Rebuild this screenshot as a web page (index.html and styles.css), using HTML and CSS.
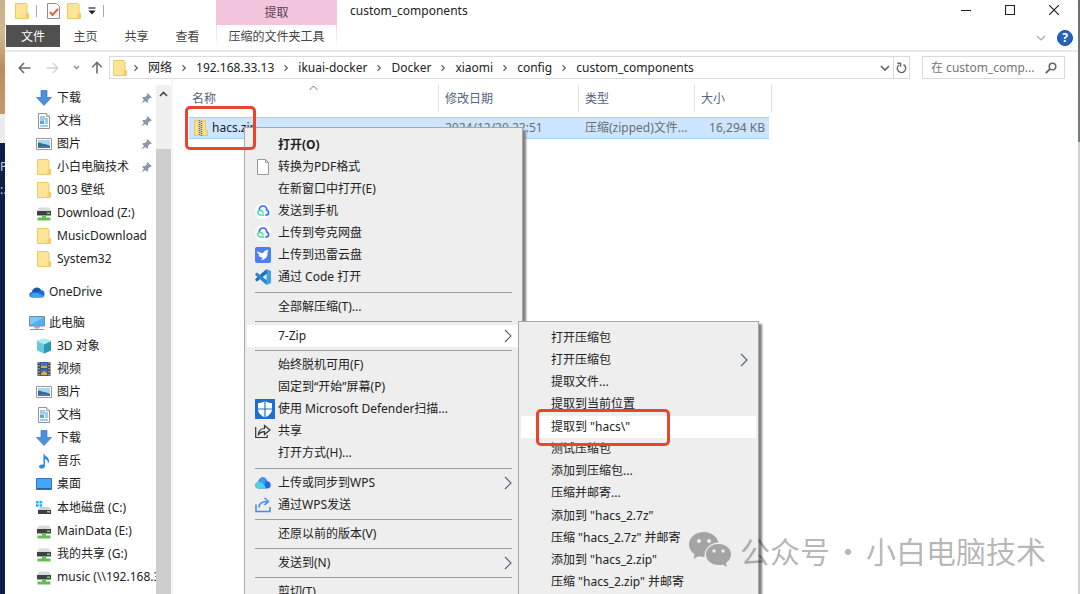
FILE: index.html
```html
<!DOCTYPE html>
<html lang="zh-CN">
<head>
<meta charset="utf-8">
<title>custom_components</title>
<link rel="stylesheet" href="styles.css">
</head>
<body>
<svg class="defs" aria-hidden="true">
  <symbol id="folder" viewBox="0 0 14 16"><path d="M.5.5h10.500l1 1v9h1.500v5H.5z" fill="#fbe08a" stroke="#ecca66"/><path d="M1 1h10v14H1z" fill="#fde496"/><path d="M11.500 10.500h2v5h-3v-4z" fill="#f3cf62"/></symbol>
  <symbol id="chev" viewBox="0 0 6 8"><path d="M1.500 1.200 4.300 4 1.500 6.800" fill="none" stroke="#666" stroke-width="1.300"/></symbol>
  <symbol id="arrow" viewBox="0 0 8 14"><path d="M1 1l6 6-6 6" fill="none" stroke="#555a78" stroke-width="1.100"/></symbol>
  <symbol id="down" viewBox="0 0 16 16"><path d="M5 .5h6v7h4.500L8 15.500.5 7.500H5z" fill="#4a90dd" stroke="#3a78c4" stroke-width=".7"/></symbol>
  <symbol id="doc" viewBox="0 0 16 16"><path d="M2.500.5h8l3 3v12h-11z" fill="#fafcfd" stroke="#8f9599"/><path d="M10.500.5v3h3" fill="#dde3e8" stroke="#8f9599" stroke-width=".8"/><path d="M4 4h5M4 6h8M9 8h3M9 10h3M4 13h8" stroke="#4c9bd3"/><path d="M4 7.500h4V11H4z" fill="#5aa5dc"/></symbol>
  <symbol id="pic" viewBox="0 0 16 14"><path d="M.5 1.500h15v11H.5z" fill="#fff" stroke="#999"/><path d="M2 3h12v8H2z" fill="#a8d4f5"/><path d="M2 6c3-1 4 1 6 1s4 1 6 2v2H2z" fill="#356b75"/><path d="M2 9c4-1 8 0 12 1v1H2z" fill="#3579bb"/></symbol>
  <symbol id="netdrive" viewBox="0 0 16 16"><path d="M3 2.500h10l2 3.500H1z" fill="#d8dadc"/><path d="M1 6h14v4.500H1z" fill="#3d4143"/><path d="M11 7.500h3V9h-3z" fill="#65df63"/><path d="M6 10.500h4v2h4.500v3h-13v-3H6z" fill="#63bf55"/></symbol>
  <symbol id="pin" viewBox="0 0 12 12"><path d="M6.500 1 11 5.500l-1.300.5-.6-.2L7 8l.1 2-1 .8L1.200 6 2 5l2 .1L6.200 3l-.2-.8zM3 7.600l1.400 1.400L.5 11.500z" fill="#8b98a5"/></symbol>
  <symbol id="quark" viewBox="0 0 16 16"><circle cx="8" cy="8" r="8" fill="#fff"/><path d="M4.200 7.200C4.400 4.800 5.800 3 8 3c2.500 0 3.600 2 3.700 4 2.800 1 2.400 5-.6 5h-.8" fill="none" stroke="#3d68f2" stroke-width="1.700"/><path d="M9 12H5.200C2.300 12 2 8.500 4 7.600c2.200-.9 4.200.6 4 3" fill="none" stroke="#43dca6" stroke-width="1.500"/></symbol>
</svg>

<div class="desktop">
  <div class="backdrop-left" aria-hidden="true">
    <div class="wood"></div><div class="pale"></div>
    <div class="terminal"><span>P</span><span>:.</span></div>
  </div>

  <div class="window">
    <header class="titlebar">
      <div class="quick">
        <svg class="i-folder"><use href="#folder"/></svg>
        <i class="tick"></i>
        <button class="plain" aria-label="属性"><svg width="13" height="16" viewBox="0 0 13 16"><path d="M.5.500h9l3 3v12H.5z" fill="#fafafa" stroke="#909090"/><path d="m3 9 2.500 3L11 6" fill="none" stroke="#dc6840" stroke-width="2"/></svg></button>
        <button class="plain" aria-label="新建文件夹"><svg class="i-folder"><use href="#folder"/></svg></button>
        <button class="plain" aria-label="自定义快速访问工具栏"><svg width="8" height="8" viewBox="0 0 8 8"><path d="M.5 1h7" stroke="#222" stroke-width="1.200"/><path d="M.3 3.500h7.400L4 7.500z" fill="#222"/></svg></button>
        <i class="tick"></i>
      </div>
      <div class="context-label">提取</div>
      <h1>custom_components</h1>
      <div class="controls">
        <button class="plain" aria-label="最小化"><svg width="10" height="10" viewBox="0 0 10 10"><path d="M0 5.500h10" stroke="#222"/></svg></button>
        <button class="plain" aria-label="最大化"><svg width="10" height="10" viewBox="0 0 10 10"><path d="M.5.500h9v9h-9z" fill="none" stroke="#222" stroke-width="1.200"/></svg></button>
        <button class="plain" aria-label="关闭"><svg width="10" height="10" viewBox="0 0 10 10"><path d="m0 0 10 10M10 0 0 10" stroke="#222" stroke-width="1.200"/></svg></button>
      </div>
    </header>

    <nav class="ribbon">
      <button class="tab file">文件</button>
      <button class="tab">主页</button>
      <button class="tab">共享</button>
      <button class="tab">查看</button>
      <button class="tab context">压缩的文件夹工具</button>
      <button class="plain expand" aria-label="展开功能区"><svg width="10" height="6" viewBox="0 0 10 6"><path d="m1 1 4 4 4-4" fill="none" stroke="#aaa" stroke-width="1.200"/></svg></button>
      <button class="help" aria-label="帮助">?</button>
    </nav>

    <div class="addressbar">
      <div class="history">
        <button class="plain" aria-label="后退"><svg width="13" height="12" viewBox="0 0 13 12"><path d="M12.500 6H1.500M6 1 1.200 6 6 11" fill="none" stroke="#6c6c6c" stroke-width="1.600"/></svg></button>
        <button class="plain" aria-label="前进"><svg width="13" height="12" viewBox="0 0 13 12"><path d="M.5 6h11M7 1l4.800 5L7 11" fill="none" stroke="#d2d2d2" stroke-width="1.400"/></svg></button>
        <button class="plain" aria-label="最近浏览的位置"><svg width="7" height="5" viewBox="0 0 7 5"><path d="m1 1 2.500 2.500L6 1" fill="none" stroke="#888" stroke-width="1.300"/></svg></button>
        <button class="plain" aria-label="上移"><svg width="12" height="13" viewBox="0 0 12 13"><path d="M6 12.500V1.500M1.200 6.200 6 1.300l4.800 4.900" fill="none" stroke="#6c6c6c" stroke-width="1.600"/></svg></button>
      </div>
      <div class="path">
        <svg class="i-folder"><use href="#folder"/></svg>
        <ol>
          <li><svg class="i-chev"><use href="#chev"/></svg><a href="#">网络</a></li>
          <li><svg class="i-chev"><use href="#chev"/></svg><a href="#">192.168.33.13</a></li>
          <li><svg class="i-chev"><use href="#chev"/></svg><a href="#">ikuai-docker</a></li>
          <li><svg class="i-chev"><use href="#chev"/></svg><a href="#">Docker</a></li>
          <li><svg class="i-chev"><use href="#chev"/></svg><a href="#">xiaomi</a></li>
          <li><svg class="i-chev"><use href="#chev"/></svg><a href="#">config</a></li>
          <li><svg class="i-chev"><use href="#chev"/></svg><a href="#">custom_components</a></li>
        </ol>
        <button class="plain" aria-label="以前的位置"><svg width="10" height="6" viewBox="0 0 10 6"><path d="m1 1 4 4 4-4" fill="none" stroke="#666" stroke-width="1.700"/></svg></button>
        <button class="plain refresh" aria-label="刷新"><svg width="11" height="12" viewBox="0 0 11 12"><path d="M7.500 2.700A4.200 4.200 0 1 1 3 3M1.200 1.300h3.300v3.400" fill="none" stroke="#666" stroke-width="1.400"/></svg></button>
      </div>
      <div class="search">
        <input type="text" aria-label="搜索" placeholder="在 custom_comp...">
        <svg width="12" height="12" viewBox="0 0 12 12"><circle cx="7.500" cy="4.500" r="3.300" fill="none" stroke="#666" stroke-width="1.500"/><path d="M5 7 .8 11.200" stroke="#666" stroke-width="1.800"/></svg>
      </div>
    </div>

    <div class="content">
      <aside class="sidebar">
        <nav class="tree">
          <ul>
            <li><svg class="i"><use href="#down"/></svg><a href="#">下载</a><svg class="i-pin"><use href="#pin"/></svg></li>
            <li><svg class="i"><use href="#doc"/></svg><a href="#">文档</a><svg class="i-pin"><use href="#pin"/></svg></li>
            <li><svg class="i"><use href="#pic"/></svg><a href="#">图片</a><svg class="i-pin"><use href="#pin"/></svg></li>
            <li><svg class="i"><use href="#folder"/></svg><a href="#">小白电脑技术</a><svg class="i-pin"><use href="#pin"/></svg></li>
            <li><svg class="i"><use href="#folder"/></svg><a href="#">003 壁纸</a></li>
            <li><svg class="i"><use href="#netdrive"/></svg><a href="#">Download (Z:)</a></li>
            <li><svg class="i"><use href="#folder"/></svg><a href="#">MusicDownload</a></li>
            <li><svg class="i"><use href="#folder"/></svg><a href="#">System32</a></li>
          </ul>
          <ul class="cloud">
            <li class="root"><svg class="i" viewBox="0 0 16 12"><path d="M3.500 11.500C-.5 11.500-.8 6.500 3 6c.6-4 6-5.500 8.300-2C14.500 4 16 6 15.500 8.500c0 2-1.500 3-3 3z" fill="#1e6fd0"/><path d="M3 11.500c-2-1-1.500-4 1-4.500 4-1 7 1 11 3-.5 1-1.500 1.500-2.500 1.500z" fill="#3aa0f0"/><path d="M3 6c3-1 6 2 9-2-2-4-8-3-9 2z" fill="#1557b5"/></svg><a href="#">OneDrive</a></li>
          </ul>
          <ul>
            <li class="root"><svg class="i" viewBox="0 0 16 16"><path d="M.5 1.500h15v9.500H.5z" fill="#4db2f8" stroke="#7b8996"/><path d="M1 2h14L1 10z" fill="#7cc9fc"/><path d="M6 11h4v2H6zM1 14.500h14" fill="#bbc4cc" stroke="#8c9aa6"/></svg><a href="#">此电脑</a></li>
            <li><svg class="i" viewBox="0 0 16 16"><path d="M8 .5 15 3v9.500L8 15.500 1 12.500V3z" fill="#67cad8"/><path d="M8 6.500 15 3v9.500l-7 3z" fill="#2898b3"/><path d="M8 .5 15 3 8 6.500 1 3z" fill="#b2ecf0"/></svg><a href="#">3D 对象</a></li>
            <li><svg class="i" viewBox="0 0 16 16"><path d="M1.500 1h13v14h-13z" fill="#444"/><path d="M4.500 1.500h7v6h-7zM4.500 8.500h7v6h-7z" fill="#3f72c4"/><path d="M5 6c2-3 4 1 6-2v3H5zM5 13l3-3 3 2v2H5z" fill="#e8ab3c"/><path d="M3 1v14M13 1v14" stroke="#ddd" stroke-dasharray="1.500 1.500"/></svg><a href="#">视频</a></li>
            <li><svg class="i"><use href="#pic"/></svg><a href="#">图片</a></li>
            <li><svg class="i"><use href="#doc"/></svg><a href="#">文档</a></li>
            <li><svg class="i"><use href="#down"/></svg><a href="#">下载</a></li>
            <li><svg class="i" viewBox="0 0 16 16"><path d="M8 .5c.5 3 5.500 3.500 5 8-.2 1.300-.8 2-1.300 2.500C12.500 8 11 6.500 9 6v7c0 3-6 3.500-6 .8 0-1.800 2.500-2.600 4.500-2V.5z" fill="#2b8ae8"/></svg><a href="#">音乐</a></li>
            <li><svg class="i" viewBox="0 0 16 16"><path d="M.5 2.500h15v11H.5z" fill="#43a5f7" stroke="#2c79c8"/><path d="M1 12h14v1.500H1z" fill="#2367ab"/></svg><a href="#">桌面</a></li>
          </ul>
          <ul>
            <li><svg class="i" viewBox="0 0 16 16"><path d="M0 1h2.700v2.500H0zM3.500 1h2.700v2.500H3.500zM0 4.300h2.700v2.500H0zM3.500 4.300h2.700v2.500H3.500z" fill="#29b0ea"/><path d="M4 7h9l2 3H2z" fill="#cfd2d4"/><path d="M2 10h13v4H2z" fill="#3c4042"/><path d="M11 11h3v1.500h-3z" fill="#72e070"/></svg><a href="#">本地磁盘 (C:)</a></li>
            <li><svg class="i"><use href="#netdrive"/></svg><a href="#">MainData (E:)</a></li>
            <li><svg class="i"><use href="#netdrive"/></svg><a href="#">我的共享 (G:)</a></li>
            <li><svg class="i"><use href="#netdrive"/></svg><a href="#">music (\\192.168.33.13)</a></li>
          </ul>
        </nav>
        <div class="scrollbar"><svg width="9" height="6" viewBox="0 0 9 6"><path d="m1 5 3.500-3.500L8 5" fill="none" stroke="#444" stroke-width="1.600"/></svg><div class="thumb"></div></div>
      </aside>

      <main class="files">
        <table>
          <colgroup><col class="c-name"><col class="c-date"><col class="c-type"><col class="c-size"><col class="c-end"></colgroup>
          <thead><tr>
            <th>名称<svg class="sort" width="9" height="6" viewBox="0 0 9 6"><path d="m.5 5 4-4 4 4" fill="none" stroke="#777"/></svg></th>
            <th>修改日期</th><th>类型</th><th colspan="2">大小</th>
          </tr></thead>
          <tbody><tr>
            <td class="name"><svg width="14" height="16" viewBox="0 0 14 16"><path d="M.5.500h11v10h2v5H.5z" fill="#fbe08a" stroke="#e9c75f"/><path d="M4 0h5v16H4z" fill="#e4d6a6"/><path d="M5.500 0v16M7.500 1v15" stroke="#6d685a" stroke-width="1.400" stroke-dasharray="1 1"/></svg>hacs.zip</td>
            <td>2024/12/20 22:51</td><td>压缩(zipped)文件...</td><td class="size">16,294 KB</td><td class="end"></td>
          </tr></tbody>
        </table>
      </main>
    </div>
  </div>
  <div class="backdrop-right" aria-hidden="true"></div>

  <div class="menu menu-main" role="menu">
    <div class="group long">
      <button role="menuitem"><span></span><b>打开(O)</b></button>
      <button role="menuitem"><svg viewBox="0 0 16 16"><path d="M2.500.5h8l3 3v12h-11z" fill="#fff" stroke="#999"/><path d="M10.500.5v3h3" fill="none" stroke="#999"/></svg>转换为PDF格式</button>
      <button role="menuitem"><span></span>在新窗口中打开(E)</button>
      <button role="menuitem"><svg><use href="#quark"/></svg>发送到手机</button>
      <button role="menuitem"><svg><use href="#quark"/></svg>上传到夸克网盘</button>
      <button role="menuitem"><svg viewBox="0 0 16 16"><rect width="16" height="16" rx="2" fill="#4b7ff2"/><path d="M2 4c2 1.500 4 2 6 2 1-2 3-3.500 5.500-3-.7.800-1 1.800-1 3 .2 4-2.500 7-6.500 7 1-.7 1.500-1.400 1.500-2.400C5 10.500 4 9.500 3.500 8l1.500.2C3 7 2.200 5.600 2 4z" fill="#fff"/></svg>上传到迅雷云盘</button>
      <button role="menuitem"><svg viewBox="0 0 16 16"><path d="M11.500 0 16 2v12l-4.500 2V0z" fill="#3ba3e4"/><path d="m11.500 0 .5 4.500L2 12.500.3 11.200V10L11.500 0z" fill="#1b70b4"/><path d="m11.500 16 .5-4.500L2 3.500.3 4.800V6L11.500 16z" fill="#2687cc"/></svg>通过 Code 打开</button>
    </div>
    <div class="group"><button role="menuitem"><span></span>全部解压缩(T)...</button></div>
    <div class="group"><button role="menuitem" class="active"><span></span>7-Zip<svg class="more"><use href="#arrow"/></svg></button></div>
    <div class="group long">
      <button role="menuitem"><span></span>始终脱机可用(F)</button>
      <button role="menuitem"><span></span>固定到“开始”屏幕(P)</button>
      <button role="menuitem"><svg class="shield" viewBox="0 0 20 20"><path d="M0 0h20v20H0z" fill="#1f6fd0"/><path d="M10 2c2 1.500 4.500 2 7 2v6c0 4-3 6.500-7 8.500C6 16.500 3 14 3 10V4c2.500 0 5-.5 7-2z" fill="#fff"/><path d="M10 2v17M3 10h14" stroke="#1f6fd0" stroke-width="1.200"/></svg>使用 Microsoft Defender扫描...</button>
      <button role="menuitem"><svg viewBox="0 0 16 16"><path d="M.7 4v10.500h11.500V12M3.500 11.500c.3-4 2.500-6 6-6V2.500L15 7l-5.500 4.500V8.700c-3 0-4.500.8-6 2.800z" fill="none" stroke="#333" stroke-width="1.200"/></svg>共享</button>
      <button role="menuitem"><span></span>打开方式(H)...</button>
    </div>
    <div class="group">
      <button role="menuitem"><svg viewBox="0 0 16 16"><path d="M4 13.500c-5 0-5-6-.8-6.500C4 1 11 .500 12 6c5 .500 5 7.500 0 7.500z" fill="#1f6ce8"/><path d="M4 13.500c-5 0-5-6-.8-6.500 4-1 7 2.500 7.500 6.500z" fill="#4fd0ea"/><path d="M3.200 7C4 3 7.500 1.500 10 3.500c2 3 0 5-1 6C7.500 7.500 5.500 6.500 3.200 7z" fill="#3c9cf4"/></svg>上传或同步到WPS<svg class="more"><use href="#arrow"/></svg></button>
      <button role="menuitem"><svg viewBox="0 0 16 16"><path d="M1 7.500v7h14V10M4 10.500c0-4 2.500-6 8-6M9.500 1l4 3.500-4 3.500" fill="none" stroke="#4389ed" stroke-width="1.500"/></svg>通过WPS发送</button>
    </div>
    <div class="group"><button role="menuitem"><span></span>还原以前的版本(V)</button></div>
    <div class="group"><button role="menuitem"><span></span>发送到(N)<svg class="more"><use href="#arrow"/></svg></button></div>
    <div class="group"><button role="menuitem"><span></span>剪切(T)</button></div>
  </div>

  <div class="menu menu-sub" role="menu">
    <div class="block">
      <button role="menuitem">打开压缩包</button>
      <button role="menuitem">打开压缩包<svg class="more"><use href="#arrow"/></svg></button>
      <button role="menuitem">提取文件...</button>
      <button role="menuitem">提取到当前位置</button>
    </div>
    <div class="block">
      <button role="menuitem" class="active">提取到 "hacs\"</button>
      <button role="menuitem">测试压缩包</button>
      <button role="menuitem">添加到压缩包...</button>
      <button role="menuitem">压缩并邮寄...</button>
    </div>
    <div class="block">
      <button role="menuitem">添加到 "hacs_2.7z"</button>
      <button role="menuitem">压缩 "hacs_2.7z" 并邮寄</button>
      <button role="menuitem">添加到 "hacs_2.zip"</button>
      <button role="menuitem">压缩 "hacs_2.zip" 并邮寄</button>
    </div>
  </div>

  <div class="mark mark-file"></div>
  <div class="mark mark-extract"></div>

  <div class="watermark">
    <svg width="42" height="36" viewBox="0 0 42 36"><path d="M15 0C6.500 0 0 5.500 0 12.500c0 4 2 7.500 5.500 9.700L4.500 27l5.200-2.800c1.800.5 3.600.8 5.800.8C15 17 21 10.500 29.500 10.500 28 4.500 22 0 15 0z"/><path d="M29.500 12C22.500 12 17 16.500 17 22.500S22.500 33 29.500 33c1.500 0 3-.2 4.200-.6L38 35l-1-4c3-2 5-5 5-8.500C42 16.500 36.500 12 29.500 12z"/><g fill="#eee"><circle cx="10" cy="9" r="2"/><circle cx="20" cy="9" r="2"/><circle cx="25" cy="19" r="1.700"/><circle cx="34" cy="19" r="1.700"/></g></svg>
    <span>公众号</span><span class="dot">·</span><span>小白电脑技术</span>
  </div>
</div>
</body>
</html>
```
FILE: styles.css
```css
* { box-sizing: border-box; }

body {
  margin: 0;
  font-family: "Noto Sans", "Noto Sans CJK SC", sans-serif;
  font-size: 12px;
  line-height: 16px;
  color: #222;
}

button, input { font: inherit; color: inherit; }
a { color: inherit; text-decoration: none; }
ul, ol { list-style: none; margin: 0; padding: 0; }
svg { flex: none; display: block; }

.defs { position: absolute; width: 0; height: 0; }

.plain {
  display: flex;
  align-items: center;
  justify-content: center;
  padding: 0;
  border: 0;
  background: none;
}

.desktop {
  position: relative;
  display: flex;
  height: 100vh;
  overflow: hidden;
  background: #fff;
}

/* Slivers of the windows behind */
.backdrop-left {
  width: 5px;
  flex: none;
  display: flex;
  flex-direction: column;
  overflow: hidden;
}
.wood { height: 114px; background: linear-gradient(#c9b18d, #d3b88f 30%, #b98d5e 60%, #c69a68); }
.pale { height: 29px; background: #ececec; }
.terminal {
  flex: 1;
  display: flex;
  flex-direction: column;
  gap: 7px;
  padding-top: 16px;
  background: #0b2148;
  color: #c4cad4;
}
.backdrop-right { width: 2px; flex: none; background: linear-gradient(#6a706e, #777d7a 142px, #d0d0d0 142px); }

.window { flex: 1; min-width: 0; display: flex; flex-direction: column; }

/* Title bar */
.titlebar { display: flex; height: 25px; }
.quick {
  width: 211px;
  display: flex;
  align-items: center;
  gap: 8px;
  padding: 0 0 4px 10px;
}
.i-folder { width: 14px; height: 16px; }
.quick .plain + .plain { margin-left: -1px; }
.tick { width: 1px; height: 12px; margin: 0 2px 0 -1px; background: #aaa; }
.context-label {
  width: 121px;
  display: flex;
  align-items: center;
  justify-content: center;
  background: #f4c6dd;
  color: #5c3f4f;
}
h1 { margin: 0; padding: 3px 13px; font-size: 12px; line-height: 16px; font-weight: 400; }
.controls { margin-left: auto; display: flex; gap: 34px; padding: 0 19px 5px 0; }

/* Ribbon */
.ribbon {
  display: flex;
  align-items: center;
  height: 27px;
  padding: 0 5px 3px 1px;
  border-bottom: 2px solid #e9eaeb;
}
.tab { height: 22px; width: 51px; padding: 2px 0 0; border: 0; background: none; color: #444; }
.tab.file { width: 54px; background: #505050; color: #fff; }
.tab.context {
  width: 121px;
  margin-left: 3px;
  border: solid;
  border-width: 0 1px;
  border-image: linear-gradient(#ddd, #fff) 1;
}
.expand { margin-left: auto; width: 24px; height: 22px; margin-right: 4px; padding-top: 3px; }
.help {
  width: 16px;
  height: 16px;
  margin-top: 3px;
  padding: 0;
  border: 1px solid #1c4f9e;
  border-radius: 50%;
  background: #2464bd;
  color: #fff;
  font-weight: 700;
  line-height: 14px;
}

/* Address bar */
.addressbar { display: flex; gap: 12px; padding: 4px 13px 1px 13px; }
.history { display: flex; align-items: center; gap: 15px; }
.history .plain:nth-child(3) { margin-left: -1px; }
.history .plain:nth-child(4) { margin-left: -4px; }
.path {
  flex: 1;
  display: flex;
  align-items: stretch;
  height: 23px;
  margin-left: -6px;
  padding-left: 3px;
  border: 1px solid #dadada;
}
.path > .i-folder { align-self: center; }
.path ol { display: flex; align-items: center; flex: 1; margin-left: -3px; }
.path li { display: flex; align-items: center; }
.i-chev { width: 6px; height: 8px; margin: 0 9px; }
.path .plain { width: 16px; }
.path .refresh { border-left: 1px solid #dadada; }
.search {
  width: 143px;
  height: 23px;
  display: flex;
  align-items: center;
  padding: 0 7px 0 8px;
  border: 1px solid #dadada;
}
.search input { flex: 1; min-width: 0; padding: 0; border: 0; outline: 0; background: none; }
.search input::placeholder { color: #757575; opacity: 1; }

/* Navigation pane */
.content { flex: 1; display: flex; min-height: 0; }
.sidebar {
  width: 168px;
  flex: none;
  display: flex;
  padding-top: 5px;
  border-right: 2px solid #f6f6f6;
}
.tree { flex: 1; min-width: 0; overflow: hidden; padding-top: 1px; }
.tree ul + ul { margin-top: 8px; }
.tree ul.cloud { margin-top: 10px; }
.tree ul:last-child { margin-top: 1px; }
.tree li {
  display: flex;
  align-items: center;
  gap: 5px;
  height: 23px;
  padding: 0 3px 0 31px;
  white-space: nowrap;
}
.tree li.root { padding-left: 24px; gap: 4px; }
.tree a { flex: 1; min-width: 0; }
.i { width: 16px; height: 16px; }
.i-pin { width: 12px; height: 12px; }
.scrollbar {
  width: 15px;
  display: flex;
  flex-direction: column;
  align-items: center;
  padding-top: 6px;
  background: #f0f0f0;
}
.thumb { width: 15px; flex: 1; margin-top: 52px; background: #cdcdcd; }

/* File list */
.files { flex: 1; padding-left: 16px; }
table { width: 583px; table-layout: fixed; border-spacing: 0 5px; }
.c-name { width: 250px; }
.c-date { width: 140px; }
.c-type { width: 116px; }
.c-end { width: 3px; }
th, td { padding: 0 0 0 6px; text-align: left; font-weight: 400; white-space: nowrap; }
th { position: relative; height: 27px; border-right: 1px solid #e2e2e2; color: #55637d; }
th:first-child { padding-left: 3px; }
.sort { position: absolute; top: 0; left: 50%; margin-left: -5px; }
td {
  height: 22px;
  background: #cce6ff;
  box-shadow: inset 0 1px #a6d2fa, inset 0 -1px #a6d2fa;
  color: #6d6d6d;
}
td.name { padding-left: 5px; color: #222; }
.name svg { display: inline-block; vertical-align: middle; margin-right: 4px; }
.size { text-align: right; padding-right: 4px; }
.end { padding: 0; background: none; box-shadow: none; }

/* Context menus */
.menu {
  position: absolute;
  padding: 4px 2px;
  border: 1px solid #a8a8a8;
  background: #eee;
  box-shadow: 3px 3px 2px #808080;
}
.menu-main { left: 244px; top: 127px; width: 279px; padding-top: 6px; }
.menu-sub { left: 518px; top: 321px; width: 241px; padding-top: 5px; }
.menu button {
  display: flex;
  align-items: center;
  gap: 7px;
  width: 100%;
  height: 22px;
  padding: 0 8px;
  border: 0;
  background: none;
  text-align: left;
  white-space: nowrap;
}
.menu button.active { background: #fff; }
.menu button > svg:first-child, .menu button > span { width: 16px; height: 16px; }
.menu button > svg.shield { width: 20px; height: 20px; margin-right: -4px; }
.menu button > svg.more { width: 8px; height: 14px; margin-left: auto; }
.group + .group { margin-top: 3px; padding-top: 3px; position: relative; border-top: 1px solid transparent; }
.group + .group::before {
  content: "";
  position: absolute;
  top: -1px;
  left: 8px;
  right: 8px;
  height: 1px;
  background: #9c9c9c;
}
.group.long { padding-bottom: 1px; }
.menu-sub button { padding: 0 8px 0 30px; }
.block + .block { margin-top: 1px; }

/* Highlights */
.mark { position: absolute; border: 3px solid #e8452c; border-radius: 5px; }
.mark-file { left: 185px; top: 106px; width: 71px; height: 44px; }
.mark-extract { left: 536px; top: 409px; width: 134px; height: 37px; }

.watermark {
  position: absolute;
  left: 689px;
  top: 532px;
  display: flex;
  align-items: center;
  color: rgba(0, 0, 0, .3);
  font-family: "Noto Sans CJK SC", sans-serif;
  font-size: 30px;
  line-height: 36px;
}
.watermark svg { margin-right: 9px; fill: #a4a4a4; }
.dot { width: 36px; text-align: center; }
```
